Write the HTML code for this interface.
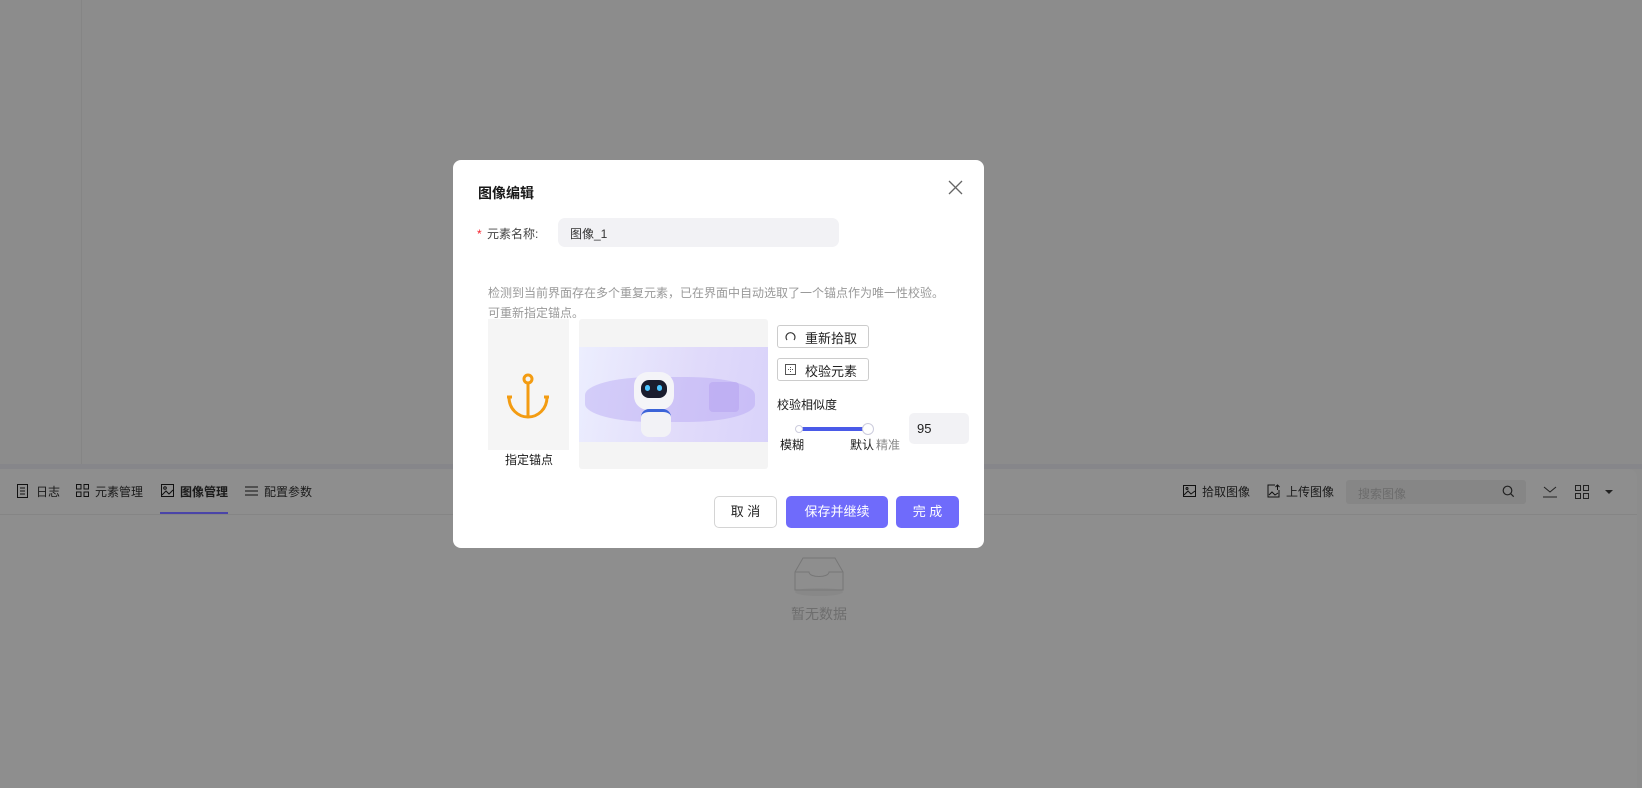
<!DOCTYPE html>
<html><head><meta charset="utf-8"><style>
*{box-sizing:border-box;margin:0;padding:0}
body{width:1642px;height:788px;overflow:hidden;background:#8c8c8c;font-family:"Liberation Sans","Noto Sans CJK SC",sans-serif;position:relative;color:#222}
.a{position:absolute}
.t{font-size:12px;color:#1a1a1a;white-space:nowrap}
</style></head><body>
<div class="a" style="left:81px;top:0;width:1px;height:466px;background:#858585"></div>
<div class="a" style="left:0;top:464px;width:1642px;height:5px;background:#86868a"></div>
<div class="a" style="left:0;top:469px;width:1637px;height:319px;background:#8e8e8e;border-top-right-radius:8px"></div>
<div class="a" style="left:0;top:514px;width:1637px;height:1px;background:#858585"></div>
<!-- tabs -->
<svg class="a" style="left:16px;top:484px" width="13" height="14" viewBox="0 0 13 14" fill="none" stroke="#111" stroke-width="1"><rect x="1.5" y="0.5" width="10" height="13"/><path d="M4 4h5M4 7h5M4 10h5"/></svg>
<div class="a t" style="left:36px;top:483px">日志</div>
<svg class="a" style="left:76px;top:484px" width="13" height="13" fill="none" stroke="#111"><rect x=".5" y=".5" width="4.5" height="4.5"/><rect x="8" y=".5" width="4.5" height="4.5"/><rect x=".5" y="8" width="4.5" height="4.5"/><rect x="8" y="8" width="4.5" height="4.5"/></svg>
<div class="a t" style="left:95px;top:483px">元素管理</div>
<svg class="a" style="left:161px;top:484px" width="13" height="13" fill="none" stroke="#111"><rect x=".5" y=".5" width="12" height="12"/><circle cx="4" cy="4" r="1.3"/><path d="M1 11l4-4 3 3 4-4"/></svg>
<div class="a t" style="left:180px;top:483px;font-weight:bold">图像管理</div>
<div class="a" style="left:160px;top:512px;width:68px;height:2px;background:#4a44a8"></div>
<svg class="a" style="left:245px;top:484px" width="13" height="13" fill="none" stroke="#111"><path d="M0 3h13M0 7h13M0 11h13"/></svg>
<div class="a t" style="left:264px;top:483px">配置参数</div>
<svg class="a" style="left:1183px;top:485px" width="13" height="12" fill="none" stroke="#111"><rect x=".5" y=".5" width="12" height="11"/><path d="M1 10l4-4 3 3 4-3"/><circle cx="4" cy="3.5" r="1"/></svg>
<div class="a t" style="left:1202px;top:483px">拾取图像</div>
<svg class="a" style="left:1267px;top:484px" width="13" height="14" fill="none" stroke="#111"><path d="M8 1H1v12h11V6"/><path d="M10.5 1v5M8.5 3l2-2 2 2"/><path d="M2 11l3-3 3 3 3-2"/></svg>
<div class="a t" style="left:1286px;top:483px">上传图像</div>
<div class="a" style="left:1346px;top:480px;width:180px;height:24px;background:#868686;border-radius:3px"></div>
<div class="a t" style="left:1358px;top:485px;color:#6c6c6c">搜索图像</div>
<svg class="a" style="left:1502px;top:485px" width="13" height="13" fill="none" stroke="#222" stroke-width="1.2"><circle cx="5.5" cy="5.5" r="4.3"/><path d="M8.7 8.7l3 3"/></svg>
<svg class="a" style="left:1543px;top:486px" width="14" height="12" fill="none" stroke="#222"><path d="M1 1l6 5 6-5M0 11h14"/></svg>
<svg class="a" style="left:1575px;top:485px" width="14" height="14" fill="none" stroke="#222"><rect x=".5" y=".5" width="5" height="5"/><rect x="8.5" y=".5" width="5" height="5"/><rect x=".5" y="8.5" width="5" height="5"/><rect x="8.5" y="8.5" width="5" height="5"/></svg>
<div class="a" style="left:1605px;top:490px;border:4px solid transparent;border-top:4px solid #222"></div>
<!-- empty -->
<svg class="a" style="left:793px;top:552px" width="52" height="45" fill="none" stroke="#777"><ellipse cx="26" cy="40" rx="24" ry="4" fill="#888" stroke="none"/><path d="M2 20l8-14h32l8 14v18H2z"/><path d="M2 20h14c0 6 20 6 20 0h14"/></svg>
<div class="a" style="left:791px;top:604px;font-size:14px;color:#6e6e6e">暂无数据</div>

<!-- modal -->
<div class="a" style="left:453px;top:160px;width:531px;height:388px;background:#fff;border-radius:8px"></div>
<div class="a" style="left:478px;top:183px;font-size:14px;font-weight:bold;color:#1a1a1a">图像编辑</div>
<svg class="a" style="left:948px;top:180px" width="15" height="15" stroke="#666" stroke-width="1.3"><path d="M1 1l13 13M14 1L1 14"/></svg>
<div class="a" style="left:477px;top:227px;font-size:12px;color:#f5222d">*</div>
<div class="a t" style="left:487px;top:225px;color:#444">元素名称:</div>
<div class="a" style="left:558px;top:218px;width:281px;height:29px;background:#f2f2f5;border-radius:7px"></div>
<div class="a t" style="left:570px;top:225px;color:#333">图像_1</div>
<div class="a" style="left:488px;top:283px;font-size:12px;color:#999;line-height:20px;width:470px">检测到当前界面存在多个重复元素，已在界面中自动选取了一个锚点作为唯一性校验。<br>可重新指定锚点。</div>
<div class="a" style="left:488px;top:319px;width:81px;height:131px;background:#f5f5f5"></div>
<div class="a" style="left:488px;top:450px;width:81px;height:19px;background:#fff"></div>
<svg class="a" style="left:506px;top:373px" width="44" height="46" fill="none" stroke="#f39c12" stroke-width="3"><circle cx="22" cy="6" r="4"/><path d="M22 10v34M3 24c0 12 9 20 19 20s19-8 19-20M1 24h5M38 24h5"/></svg>
<div class="a t" style="left:505px;top:451px">指定锚点</div>
<div class="a" style="left:579px;top:319px;width:189px;height:150px;background:#f4f4f4;border-radius:3px"></div>
<div class="a" style="left:579px;top:347px;width:189px;height:95px;background:linear-gradient(100deg,#eceefe,#e0dafa 60%,#d9d3fa);overflow:hidden">
 <div class="a" style="left:6px;top:30px;width:170px;height:45px;border-radius:40%;background:rgba(170,150,240,.35)"></div>
 <div class="a" style="left:55px;top:25px;width:40px;height:38px;border-radius:14px;background:#f4f4f8"></div>
 <div class="a" style="left:62px;top:33px;width:26px;height:18px;border-radius:8px;background:#1a1c2e"></div>
 <div class="a" style="left:66px;top:38px;width:5px;height:6px;border-radius:3px;background:#4cc4ff"></div>
 <div class="a" style="left:78px;top:38px;width:5px;height:6px;border-radius:3px;background:#4cc4ff"></div>
 <div class="a" style="left:62px;top:62px;width:30px;height:28px;border-radius:8px;background:#f2f2f6;border-top:3px solid #3b63d8"></div>
 <div class="a" style="left:130px;top:35px;width:30px;height:30px;background:rgba(180,160,240,.5);border-radius:4px"></div>
</div>
<div class="a" style="left:777px;top:325px;width:92px;height:23px;border:1px solid #ccc;border-radius:3px"></div>
<svg class="a" style="left:785px;top:331px" width="11" height="11" fill="none" stroke="#333" stroke-width="1.2"><path d="M2 9A4.5 4.5 0 1 1 9 9"/></svg>
<div class="a" style="left:805px;top:328px;font-size:13px;color:#222">重新拾取</div>
<div class="a" style="left:777px;top:358px;width:92px;height:23px;border:1px solid #ccc;border-radius:3px"></div>
<svg class="a" style="left:785px;top:364px" width="11" height="11" fill="none" stroke="#555"><rect x=".5" y=".5" width="10" height="10"/><path d="M5.5 3v5M3 5.5h5" stroke-dasharray="1 1"/></svg>
<div class="a" style="left:805px;top:361px;font-size:13px;color:#222">校验元素</div>
<div class="a t" style="left:777px;top:396px">校验相似度</div>
<div class="a" style="left:799px;top:427px;width:70px;height:4px;background:#4a5ae8;border-radius:2px"></div>
<div class="a" style="left:795px;top:425px;width:8px;height:8px;border-radius:50%;background:#fff;border:1px solid #ccd"></div>
<div class="a" style="left:862px;top:423px;width:12px;height:12px;border-radius:50%;background:#fff;border:1px solid #ccd"></div>
<div class="a t" style="left:780px;top:436px">模糊</div>
<div class="a t" style="left:850px;top:436px">默认</div>
<div class="a t" style="left:876px;top:436px;color:#888">精准</div>
<div class="a" style="left:909px;top:413px;width:60px;height:31px;background:#f2f2f5;border-radius:5px"></div>
<div class="a" style="left:917px;top:421px;font-size:13px;color:#222">95</div>
<div class="a" style="left:714px;top:496px;width:63px;height:32px;border:1px solid #d4d4d4;border-radius:5px;font-size:13px;text-align:center;line-height:30px;color:#222">取 消</div>
<div class="a" style="left:786px;top:496px;width:102px;height:32px;background:#6f6bfb;border-radius:5px;font-size:13px;text-align:center;line-height:32px;color:#fff">保存并继续</div>
<div class="a" style="left:896px;top:496px;width:63px;height:32px;background:#6f6bfb;border-radius:5px;font-size:13px;text-align:center;line-height:32px;color:#fff">完 成</div>
</body></html>
